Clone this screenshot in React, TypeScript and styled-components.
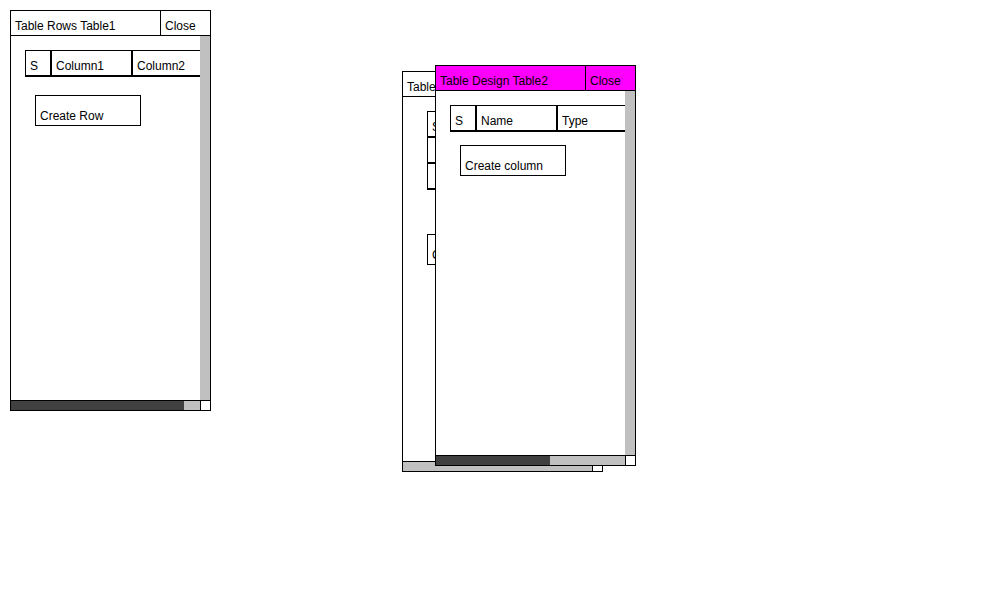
import React from "react";
import styled, { createGlobalStyle } from "styled-components";

const GlobalStyle = createGlobalStyle`
  html, body {
    margin: 0;
    padding: 0;
    background: #fff;
  }
  body {
    font-family: "Liberation Sans", Arial, sans-serif;
    font-size: 12px;
    color: #000;
  }
`;

const Desktop = styled.div`
  position: relative;
  width: 1000px;
  height: 600px;
  overflow: hidden;
  background: #fff;
`;

// windows sit on a free canvas, so they get absolute coordinates
const Frame = styled.div<{ $x: number; $y: number }>`
  position: absolute;
  left: ${({ $x }) => $x}px;
  top: ${({ $y }) => $y}px;
  width: 201px;
  height: 401px;
  box-sizing: border-box;
  border: 1px solid #000;
  background: #fff;
  display: flex;
  flex-direction: column;
`;

const TitleBar = styled.div<{ $bg?: string }>`
  display: flex;
  height: 25px;
  flex-shrink: 0;
  box-sizing: border-box;
  border-bottom: 1px solid #000;
  background: ${({ $bg }) => $bg || "#fff"};
`;

const Title = styled.div`
  flex: 1;
  padding: 8px 4px 0;
  line-height: 14px;
  white-space: nowrap;
  overflow: hidden;
`;

const CloseButton = styled.div`
  width: 50px;
  box-sizing: border-box;
  border-left: 1px solid #000;
  padding: 8px 4px 0;
  line-height: 14px;
  cursor: pointer;
`;

const Body = styled.div`
  flex: 1;
  display: flex;
  min-height: 0;
`;

const Viewport = styled.div`
  flex: 1;
  overflow: hidden;
  padding: 14px 0 0 14px;
`;

const VScroll = styled.div`
  width: 10px;
  background: #c0c0c0;
`;

const HScrollRow = styled.div`
  display: flex;
  height: 10px;
  flex-shrink: 0;
  box-sizing: border-box;
  border-top: 1px solid #000;
`;

const HTrack = styled.div`
  flex: 1;
  display: flex;
  background: #c0c0c0;
`;

const HThumb = styled.div`
  background: #404040;
`;

const Corner = styled.div`
  width: 10px;
  box-sizing: border-box;
  border-left: 1px solid #000;
  background: #fff;
`;

const Grid = styled.div<{ $indent: number }>`
  display: flex;
  flex-direction: column;
  width: max-content;
  margin-left: ${({ $indent }) => $indent}px;
`;

const Row = styled.div`
  display: flex;
`;

const Cell = styled.div<{ $w: number; $head?: boolean; $ghost?: boolean }>`
  width: ${({ $w }) => $w}px;
  height: ${({ $head }) => ($head ? 27 : 26)}px;
  box-sizing: border-box;
  border: 1px solid ${({ $ghost }) => ($ghost ? "transparent" : "#000")};
  border-top-width: ${({ $head }) => ($head ? 1 : 0)}px;
  border-bottom-width: 2px;
  padding: ${({ $head }) => ($head ? 8 : 7)}px 4px 0;
  line-height: 14px;
  white-space: nowrap;
  overflow: hidden;
`;

const ActionButton = styled.button<{ $gap: number }>`
  display: block;
  width: 106px;
  height: 31px;
  margin: ${({ $gap }) => $gap}px 0 0 10px;
  box-sizing: border-box;
  border: 1px solid #000;
  padding: 11px 4px 0;
  background: #fff;
  font: inherit;
  line-height: 14px;
  color: #000;
  text-align: left;
  vertical-align: top;
  cursor: pointer;
`;

const widths = [26, 81, 81];

type Win = {
  title: string;
  x: number;
  y: number;
  titleBg?: string;
  columns: string[];
  rows: string[][];
  ghostRows: number;
  indent: number;
  action: string;
  gap: number;
  thumb: number;
};

const windows: Win[] = [
  {
    title: "Table Rows Table1",
    x: 10,
    y: 10,
    columns: ["S", "Column1", "Column2"],
    rows: [],
    ghostRows: 0,
    indent: 0,
    action: "Create Row",
    gap: 18,
    thumb: 173,
  },
  {
    title: "Table Design Table1",
    x: 402,
    y: 71,
    columns: ["S", "Name", "Type"],
    rows: [
      ["", "ID", "Integer"],
      ["", "Name", "String"],
    ],
    ghostRows: 1,
    indent: 10,
    action: "Create column",
    gap: 18,
    thumb: 0,
  },
  {
    title: "Table Design Table2",
    x: 435,
    y: 65,
    titleBg: "#ff00ff",
    columns: ["S", "Name", "Type"],
    rows: [],
    ghostRows: 0,
    indent: 0,
    action: "Create column",
    gap: 13,
    thumb: 114,
  },
];

function TableWindow({ win }: { win: Win }) {
  return (
    <Frame $x={win.x} $y={win.y}>
      <TitleBar $bg={win.titleBg}>
        <Title>{win.title}</Title>
        <CloseButton>Close</CloseButton>
      </TitleBar>
      <Body>
        <Viewport>
          <Grid $indent={win.indent}>
            <Row>
              {win.columns.map((c, i) => (
                <Cell key={c} $w={widths[i]} $head>
                  {c}
                </Cell>
              ))}
            </Row>
            {win.rows.map((r, ri) => (
              <Row key={ri}>
                {r.map((v, i) => (
                  <Cell key={i} $w={widths[i]}>
                    {v}
                  </Cell>
                ))}
              </Row>
            ))}
            {Array.from({ length: win.ghostRows }).map((_, ri) => (
              <Row key={"g" + ri}>
                {widths.map((w, i) => (
                  <Cell key={i} $w={w} $ghost />
                ))}
              </Row>
            ))}
          </Grid>
          <ActionButton $gap={win.gap}>{win.action}</ActionButton>
        </Viewport>
        <VScroll />
      </Body>
      <HScrollRow>
        <HTrack>
          <HThumb style={{ width: win.thumb }} />
        </HTrack>
        <Corner />
      </HScrollRow>
    </Frame>
  );
}

export default function App() {
  return (
    <>
      <GlobalStyle />
      <Desktop>
        {windows.map((w) => (
          <TableWindow key={w.title} win={w} />
        ))}
      </Desktop>
    </>
  );
}
